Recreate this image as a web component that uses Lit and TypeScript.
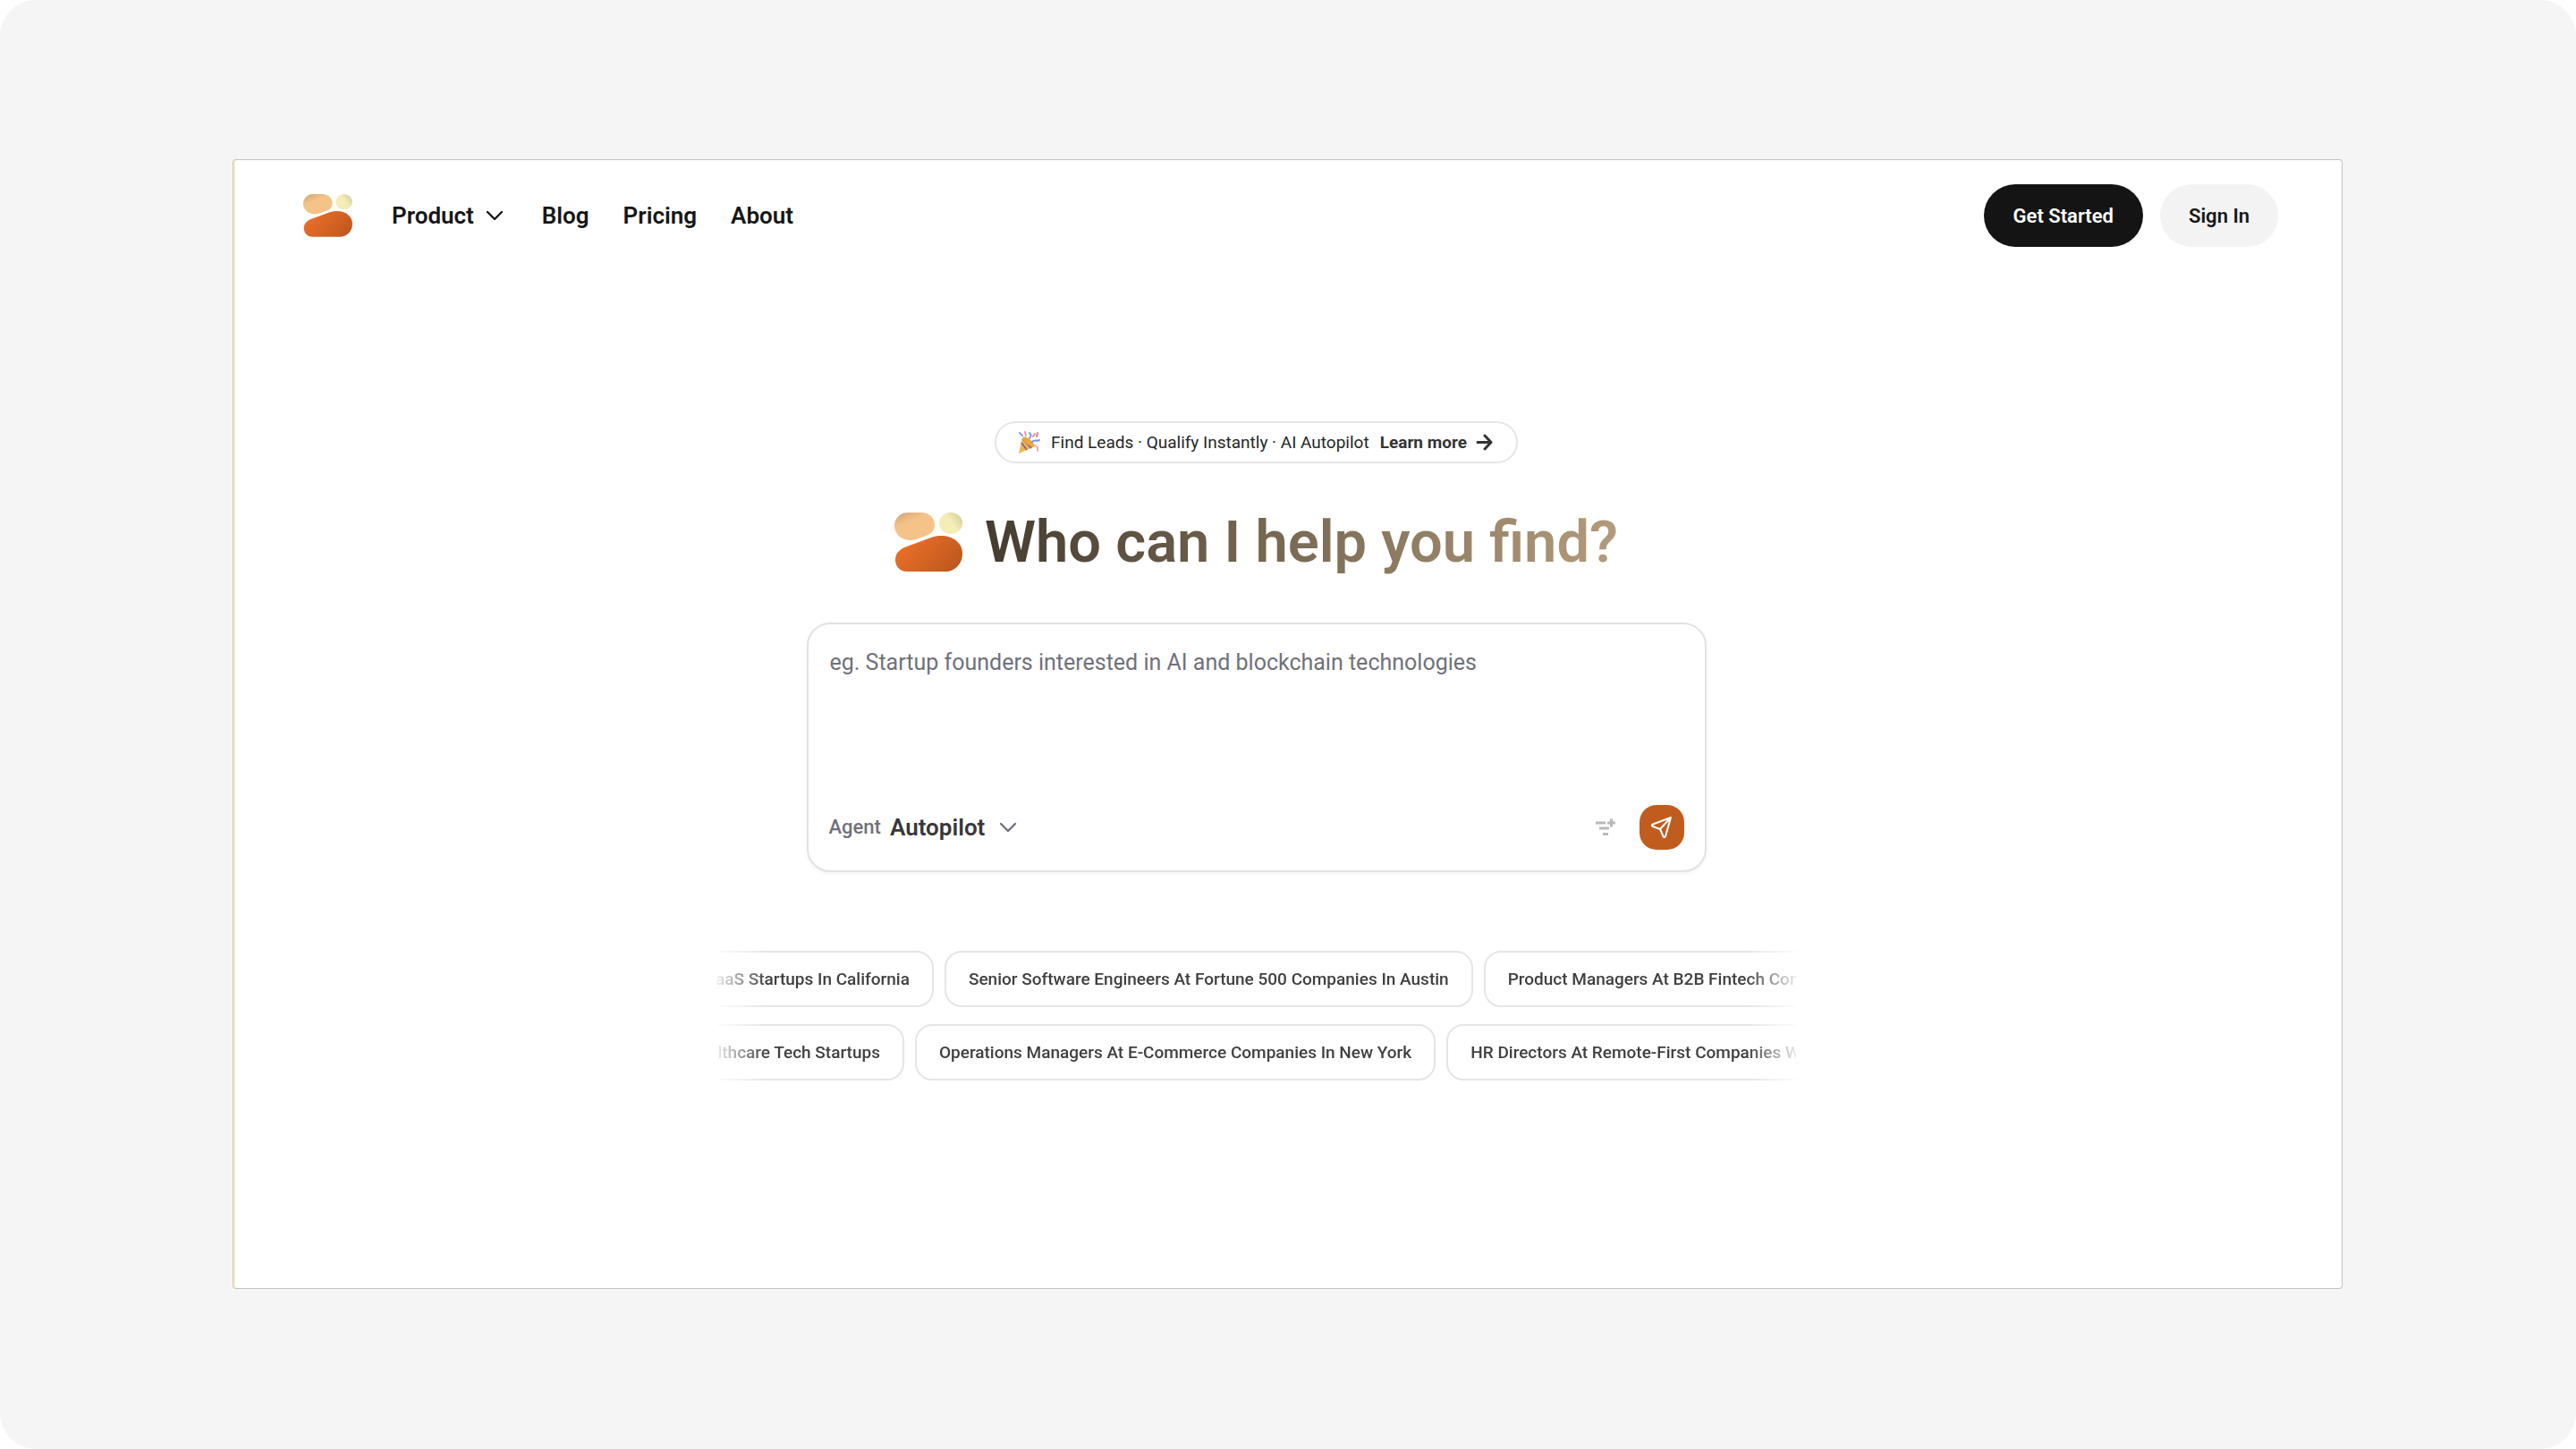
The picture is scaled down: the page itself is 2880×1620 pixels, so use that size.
import { LitElement, html, css, svg } from "lit";
import { customElement } from "lit/decorators.js";
import { styleMap } from "lit/directives/style-map.js";

interface SuggestionRow {
  scrolled: number;
  labels: string[];
}

const ROWS: SuggestionRow[] = [
  {
    scrolled: 40,
    labels: [
      "SaaS Startups In California",
      "Senior Software Engineers At Fortune 500 Companies In Austin",
      "Product Managers At B2B Fintech Companies",
    ],
  },
  {
    scrolled: 60,
    labels: [
      "Healthcare Tech Startups",
      "Operations Managers At E-Commerce Companies In New York",
      "HR Directors At Remote-First Companies Worldwide",
    ],
  },
];

const chevron = html`<svg class="chevron" viewBox="0 0 20 12" aria-hidden="true">
  <path d="M2 2l8 8 8-8" fill="none" stroke="currentColor" stroke-width="2.4" stroke-linecap="round" stroke-linejoin="round" />
</svg>`;

@customElement("brand-logo")
export class BrandLogo extends LitElement {
  static styles = css`
    :host { display: block; }
    svg { display: block; width: 100%; height: auto; }
  `;

  render() {
    return html`<svg viewBox="0 0 76 66" aria-hidden="true">
      <defs>
        <linearGradient id="peach" x1="0.1" y1="0" x2="0.5" y2="0.6">
          <stop offset="0" stop-color="#d2a778" />
          <stop offset="0.6" stop-color="#f5c387" />
          <stop offset="1" stop-color="#f5c387" />
        </linearGradient>
        <linearGradient id="lemon" x1="1" y1="0.1" x2="0.3" y2="0.6">
          <stop offset="0" stop-color="#d0cb9c" />
          <stop offset="0.7" stop-color="#f4edb6" />
          <stop offset="1" stop-color="#f4edb6" />
        </linearGradient>
        <linearGradient id="ember" x1="0" y1="0.3" x2="1" y2="0.8">
          <stop offset="0" stop-color="#ed7029" />
          <stop offset="1" stop-color="#bd571d" />
        </linearGradient>
      </defs>
      <path fill="url(#peach)" d="M15 0H30C39 0 45 6 45 14C45 20 41 24 35 26L24 30C12 34 0 26 0 15C0 6 7 0 15 0Z" />
      <ellipse fill="url(#lemon)" cx="63" cy="12" rx="13" ry="12" />
      <path fill="url(#ember)" d="M41 28C59 22 76 31 76 46C76 58 67 66 57 66H14C6 66 1 60 1 53C1 46 5 42 11 39Z" />
    </svg>`;
  }
}

@customElement("app-root")
export class AppRoot extends LitElement {
  static styles = css`
    :host {
      display: block;
      font-family: Roboto, "Liberation Sans", sans-serif;
      color: #171717;
      background: #fff;
    }
    * { box-sizing: border-box; }
    button, textarea { font: inherit; color: inherit; }
    button { border: 0; background: none; padding: 0; cursor: pointer; }
    a { color: inherit; text-decoration: none; }
    h1 { margin: 0; }
    svg { display: block; flex: none; }

    .backdrop {
      display: flex;
      min-height: 100vh;
      padding: 178px 261px 179px 260px;
      border-radius: 40px;
      background: #f5f5f5;
    }
    .window {
      flex: 1;
      min-width: 0;
      background: #fff;
      border: 1px solid #c2c2c2;
      border-left-color: #d0c8bc;
      border-radius: 4px;
      box-shadow: inset 2px 0 0 #f6e9d4;
    }
    .topbar {
      display: flex;
      align-items: center;
      justify-content: space-between;
      padding: 27px 71px 0 78px;
    }
    .nav { display: flex; align-items: center; gap: 38px; font-size: 26px; line-height: 30px; font-weight: 600; }
    .nav-logo { width: 55px; margin-right: 6px; }
    .nav-menu { display: flex; align-items: center; gap: 13px; margin-right: 5px; }
    .chevron { width: 20px; height: 12px; }
    .actions { display: flex; gap: 19px; }
    .pill-button {
      height: 70px;
      padding: 0 32px;
      border-radius: 35px;
      font-size: 22px;
      font-weight: 600;
      background: #f3f3f3;
    }
    .pill-dark { padding: 0 33px; background: #141414; color: #fff; }

    .hero {
      display: flex;
      flex-direction: column;
      align-items: center;
      padding: 195px 70px 0 0;
    }
    .notice {
      display: flex;
      align-items: center;
      height: 47px;
      padding: 0 26px 0 24px;
      border: 2px solid #e5e5e5;
      border-radius: 24px;
      font-size: 19px;
      color: #262626;
    }
    .party { width: 25px; height: 25px; margin-right: 12px; }
    .notice-more { display: flex; align-items: center; gap: 10px; margin-left: 12px; font-weight: 700; color: #333; }
    .arrow { width: 19px; height: 19px; }
    .headline { display: flex; align-items: center; gap: 25px; margin-top: 48px; }
    .headline-logo { width: 76px; }
    .headline-text {
      font-size: 65px;
      line-height: 80px;
      font-weight: 600;
      background: linear-gradient(90deg, #453c30, #b39c7c);
      -webkit-background-clip: text;
      background-clip: text;
      color: transparent;
    }
    .composer {
      display: flex;
      flex-direction: column;
      width: 1006px;
      max-width: 100%;
      margin-top: 50px;
      padding: 22px 23px 24px;
      border: 2px solid #e2e2e2;
      border-radius: 26px;
      box-shadow: 0 2px 4px rgba(0, 0, 0, 0.05);
    }
    .prompt {
      display: block;
      width: 100%;
      height: 180px;
      padding: 5px 1px 0;
      border: 0;
      outline: 0;
      resize: none;
      background: none;
      font-size: 25px;
      line-height: 32px;
    }
    .prompt::placeholder { color: #71717a; opacity: 1; }
    .tools { display: flex; align-items: center; justify-content: space-between; height: 49px; }
    .agent { display: flex; align-items: center; font-size: 26px; line-height: 30px; font-weight: 600; color: #383838; }
    .agent-label { margin-right: 10px; font-size: 22px; font-weight: 500; color: #71717a; }
    .agent .chevron { margin-left: 16px; color: #71717a; }
    .tool-actions { display: flex; align-items: center; gap: 26px; }
    .filter-icon { width: 24px; height: 22px; }
    .send {
      display: flex;
      align-items: center;
      justify-content: center;
      width: 50px;
      height: 50px;
      border-radius: 19px;
      background: #c15c1f;
    }
    .send-icon { width: 26px; height: 26px; }

    .suggestions {
      display: flex;
      flex-direction: column;
      gap: 19px;
      width: 1206px;
      max-width: 100%;
      margin-top: 88px;
      overflow: hidden;
      mask-image: linear-gradient(90deg, rgba(0, 0, 0, 0.1), #000 56px, #000 calc(100% - 56px), rgba(0, 0, 0, 0.1));
    }
    .track { display: flex; gap: 12px; }
    .chip {
      flex: none;
      height: 63px;
      padding: 0 25px;
      border: 2px solid #e5e5e5;
      border-radius: 19px;
      font-size: 19px;
      font-weight: 500;
      color: #404040;
      white-space: nowrap;
    }
  `;

  private track(row: SuggestionRow) {
    return html`<div class="track" style=${styleMap({ marginLeft: `${-row.scrolled}px` })}>
      ${row.labels.map((label) => html`<button class="chip" type="button">${label}</button>`)}
    </div>`;
  }

  private partyPopper() {
    const confetti = [
      ["M2 2l3 3", "#7d9fe8"], ["M8 1l1 4", "#e79aa6"], ["M13 2c2 2 2 4 0 6", "#7f9bea"],
      ["M22 2l-1 4", "#dd7f95"], ["M17 6l2-3", "#e58a99"], ["M16 12c3-3 4 0 8-2", "#6f95ea"],
      ["M19 16l3 2 0 4", "#e5b3a8"],
    ];
    return html`<svg class="party" viewBox="0 0 25 25" aria-hidden="true">
      <path d="M5 7L19 17L1 25Z" fill="#f2b840" />
      <path d="M4 13l6 8M6 9l9 10" stroke="#8f62a3" stroke-width="2" fill="none" />
      <ellipse cx="12" cy="12" rx="3" ry="8" transform="rotate(-50 12 12)" fill="#eda63a" />
      ${confetti.map(([d, color]) => svg`<path d=${d} stroke=${color} stroke-width="2" stroke-linecap="round" fill="none" />`)}
    </svg>`;
  }

  render() {
    return html`<div class="backdrop">
      <div class="window">
        <header class="topbar">
          <nav class="nav">
            <a href="#" aria-label="Home"><brand-logo class="nav-logo"></brand-logo></a>
            <button class="nav-menu" type="button">Product ${chevron}</button>
            <a href="#blog">Blog</a>
            <a href="#pricing">Pricing</a>
            <a href="#about">About</a>
          </nav>
          <div class="actions">
            <button class="pill-button pill-dark" type="button">Get Started</button>
            <button class="pill-button" type="button">Sign In</button>
          </div>
        </header>
        <main class="hero">
          <a class="notice" href="#more">
            ${this.partyPopper()}
            <span>Find Leads · Qualify Instantly · AI Autopilot</span>
            <span class="notice-more">Learn more
              <svg class="arrow" viewBox="0 0 19 19" aria-hidden="true">
                <path d="M2 9.500H17M10 2l7 7.500-7 7.500" fill="none" stroke="currentColor" stroke-width="3" stroke-linecap="round" stroke-linejoin="round" />
              </svg>
            </span>
          </a>
          <h1 class="headline">
            <brand-logo class="headline-logo"></brand-logo>
            <span class="headline-text">Who can I help you find?</span>
          </h1>
          <form class="composer" @submit=${(event: Event) => event.preventDefault()}>
            <textarea class="prompt" aria-label="Describe who to find" placeholder="eg. Startup founders interested in AI and blockchain technologies"></textarea>
            <div class="tools">
              <button class="agent" type="button"><span class="agent-label">Agent</span>Autopilot ${chevron}</button>
              <div class="tool-actions">
                <button type="button" aria-label="Add filter">
                  <svg class="filter-icon" viewBox="0 0 24 22" aria-hidden="true">
                    <path d="M1 6h11M5 12h11M9 18.500h6M14 6h9M18.500 1.500v9" fill="none" stroke="#b9b9b9" stroke-width="3" />
                  </svg>
                </button>
                <button class="send" type="submit" aria-label="Send">
                  <svg class="send-icon" viewBox="0 0 26 26" aria-hidden="true">
                    <path d="M23 2L3 9.500C1.500 10 1.500 11.500 3 12L11 15L14.500 23C15 24.500 16.500 24.500 17 23ZM23 2L11 15" fill="none" stroke="#fff" stroke-width="2" stroke-linecap="round" stroke-linejoin="round" />
                  </svg>
                </button>
              </div>
            </div>
          </form>
          <section class="suggestions" aria-label="Suggested searches">
            ${ROWS.map((row) => this.track(row))}
          </section>
        </main>
      </div>
    </div>`;
  }
}
